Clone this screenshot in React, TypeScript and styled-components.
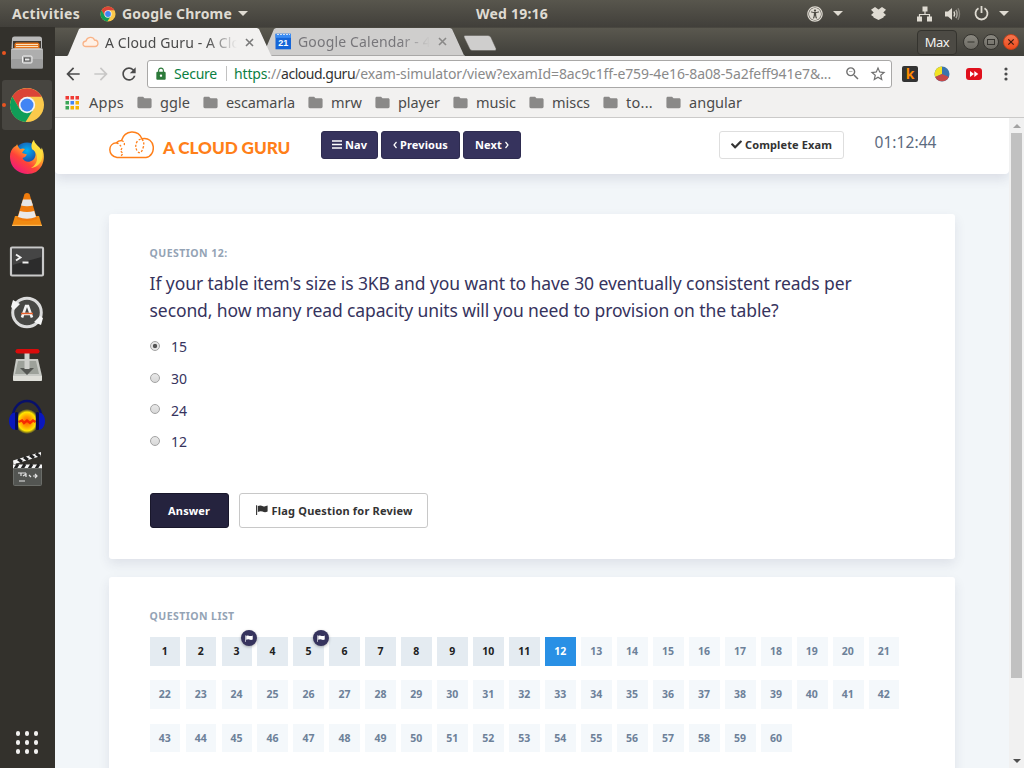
import React from 'react';
import styled, { createGlobalStyle, css } from 'styled-components';
import { MdArrowBack, MdArrowForward, MdRefresh, MdLock, MdZoomOut, MdStarBorder, MdFolder } from 'react-icons/md';
import { FaUniversalAccess, FaCheck } from 'react-icons/fa';

const Global = createGlobalStyle`
  * { box-sizing: border-box; }
  html, body { margin: 0; padding: 0; overflow: hidden; }
  body { font-family: "Noto Sans", "Open Sans", sans-serif; }
  svg { display: block; flex: none; }
`;

const Desktop = styled.div`
  width: 1024px;
  height: 768px;
  display: flex;
  flex-direction: column;
  overflow: hidden;
  background: #33312c;
`;

/* Top panel */
const TopPanel = styled.header`
  height: 27px;
  flex: none;
  display: grid;
  grid-template-columns: 476px 1fr auto;
  align-items: center;
  background: linear-gradient(#58564d, #413f3a);
  color: #dfdbd2;
  font-weight: 700;
  font-size: 14px;
  line-height: 27px;
  white-space: nowrap;
`;
const PanelLeft = styled.div`
  display: flex;
  align-items: center;
  padding-left: 12px;
`;
const PanelText = styled.span<{ $ls: number; $w: number; $gap?: number }>`
  letter-spacing: ${(p) => p.$ls}px;
  width: ${(p) => p.$w}px;
  margin-left: ${(p) => p.$gap ?? 0}px;
`;
const Tray = styled.div`
  display: flex;
  align-items: center;
  padding-right: 14px;
`;
const TrayItem = styled.div<{ $w: number }>`
  width: ${(p) => p.$w}px;
  display: flex;
`;
const Caret = styled.i`
  border: 5px solid transparent;
  border-top-color: #dfdbd2;
  border-bottom: 0;
`;

const Body = styled.div`
  flex: 1;
  min-height: 0;
  display: flex;
`;

/* Dock */
const Dock = styled.nav`
  width: 55px;
  flex: none;
  display: flex;
  flex-direction: column;
  gap: 2px;
  padding: 1px 3px 14px 2px;
  background: #33312c;
`;
const DockItem = styled.div<{ $active?: boolean }>`
  position: relative;
  height: 50px;
  flex: none;
  display: flex;
  align-items: center;
  justify-content: center;
  border-radius: 3px;
  background: ${(p) => (p.$active ? '#474540' : 'transparent')};
`;
const RunningDot = styled.i`
  position: absolute;
  left: 0;
  top: 23px;
  width: 4px;
  height: 4px;
  border-radius: 50%;
  background: #e95420;
`;
const AppGrid = styled.div`
  margin: auto auto 0;
  display: grid;
  grid-template-columns: repeat(3, 4.6px);
  grid-auto-rows: 4.6px;
  gap: 4.4px;
`;
const GridDot = styled.i`
  border-radius: 50%;
  background: #f2f1f0;
`;

/* Browser window */
const Browser = styled.main`
  flex: 1;
  min-width: 0;
  display: flex;
  flex-direction: column;
`;
const TabStrip = styled.div`
  height: 29px;
  flex: none;
  display: flex;
  align-items: flex-end;
  padding-left: 12px;
  background: linear-gradient(#5a584f, #403f3a);
  border-top: 1px solid #494740;
`;
const Tab = styled.div<{ $active?: boolean }>`
  position: relative;
  z-index: ${(p) => (p.$active ? 2 : 1)};
  height: 28px;
  width: ${(p) => (p.$active ? 205 : 203)}px;
  margin-left: ${(p) => (p.$active ? 0 : -10)}px;
  display: flex;
  align-items: center;
  padding: 0 0 0 ${(p) => (p.$active ? 15 : 13)}px;
  clip-path: polygon(0 100%, 1px 97%, 12px 4%, 14px 0, calc(100% - 15px) 0, calc(100% - 13px) 4%, calc(100% - 1px) 97%, 100% 100%);
  background: ${(p) => (p.$active ? '#f2f1f0' : '#cfcecd')};
  color: ${(p) => (p.$active ? '#4a4a4a' : '#77767a')};
  font-size: 14px;
  white-space: nowrap;
  ${(p) => !p.$active && css`border-bottom: 1px solid #a9a8a7;`}
`;
const TabTitle = styled.span<{ $w: number; $ls: number }>`
  width: ${(p) => p.$w}px;
  margin-left: 6px;
  overflow: hidden;
  letter-spacing: ${(p) => p.$ls}px;
  mask-image: linear-gradient(to right, #000 calc(100% - 30px), transparent);
`;
const TabClose = styled.svg`
  margin-left: 8px;
`;
const NewTab = styled.svg`
  margin: 0 auto 5px -2px;
`;
const WindowControls = styled.div`
  display: flex;
  align-items: center;
  height: 28px;
  padding-right: 5px;
`;
const UserChip = styled.span`
  width: 40px;
  height: 25px;
  margin-right: 2px;
  border: 1px solid #34332e;
  border-radius: 4px;
  background: #4c4a44;
  color: #f4f3f1;
  font-size: 13px;
  letter-spacing: -0.5px;
  line-height: 23px;
  text-align: center;
`;
const Round = styled.span<{ $close?: boolean }>`
  width: 16px;
  height: 16px;
  margin-left: 4px;
  border-radius: 50%;
  border: 1px solid ${(p) => (p.$close ? '#c8421b' : '#35342f')};
  background: ${(p) => (p.$close ? 'linear-gradient(#f6764f, #ee4b1c)' : 'linear-gradient(#8a8880, #6d6b64)')};
`;

const Toolbar = styled.div`
  height: 34px;
  flex: none;
  display: flex;
  align-items: center;
  padding: 2px 8px 0 8px;
  background: #f2f1f0;
  color: #4b4b4b;
`;
const ToolIcon = styled.span<{ $w: number; $dim?: boolean }>`
  width: ${(p) => p.$w}px;
  display: flex;
  color: ${(p) => (p.$dim ? '#c8c7c6' : '#4b4b4b')};
`;
const Omnibox = styled.div`
  width: 745px;
  height: 28px;
  flex: none;
  display: flex;
  align-items: center;
  padding: 0 4px 1px 6px;
  border: 1px solid #a9a8a7;
  border-radius: 3px;
  background: #fff;
  font-size: 14px;
  white-space: nowrap;
  color: #707070;
`;
const Secure = styled.span`
  width: 53px;
  height: 15px;
  margin-left: 6px;
  margin-right: 7px;
  border-right: 1px solid #c2c2c2;
  color: #0b8043;
  letter-spacing: -0.22px;
  line-height: 15px;
`;
const UrlPart = styled.span<{ $color: string; $ls: number }>`
  color: ${(p) => p.$color};
  letter-spacing: ${(p) => p.$ls}px;
`;
const OmniIcons = styled.span`
  display: flex;
  gap: 8px;
  margin: 1px 0 0 auto;
`;
const Extensions = styled.div`
  display: flex;
  align-items: center;
  margin-left: 10px;
`;
const Extension = styled.span<{ $w: number }>`
  width: ${(p) => p.$w}px;
  display: flex;
`;
const KBadge = styled.span`
  width: 16px;
  height: 16px;
  border-radius: 2px;
  background: #333;
  color: #ff8a00;
  font: 700 14px/15px "Noto Sans", sans-serif;
  text-align: center;
`;

const Bookmarks = styled.div`
  height: 28px;
  flex: none;
  display: flex;
  align-items: center;
  padding: 0 0 2px 10px;
  background: #f2f1f0;
  border-bottom: 1px solid #cbcac9;
  color: #4b4b4b;
  font-size: 14.5px;
  line-height: 25px;
  white-space: nowrap;
`;
const Bookmark = styled.span<{ $w: number; $ls: number; $gap?: number }>`
  width: ${(p) => p.$w}px;
  flex: none;
  display: flex;
  align-items: center;
  gap: ${(p) => p.$gap ?? 7}px;
  letter-spacing: ${(p) => p.$ls}px;
  svg { color: #8a8988; }
`;

/* Page */
const Viewport = styled.div`
  flex: 1;
  min-height: 0;
  display: flex;
  background: #f2f6f9;
`;
const Page = styled.div`
  flex: 1;
  min-width: 0;
  overflow: hidden;
  display: flex;
  flex-direction: column;
`;
const SiteHeader = styled.div`
  height: 56px;
  flex: none;
  display: flex;
  align-items: flex-start;
  padding: 13px 0 0 54px;
  margin-bottom: 40px;
  border-radius: 0 0 4px 4px;
  background: #fff;
  box-shadow: 0 5px 12px rgba(50, 50, 93, 0.12);
`;
const LogoText = styled.span`
  width: 158px;
  margin-left: 9px;
  padding-top: 4px;
  color: #ff7f19;
  font: 900 17.2px/26px Lato, sans-serif;
  letter-spacing: -0.1px;
  white-space: nowrap;
`;
const buttonBase = css`
  display: flex;
  align-items: center;
  justify-content: center;
  padding: 0;
  font: 700 11px/1 "Noto Sans", sans-serif;
  white-space: nowrap;
`;
const NavButton = styled.button<{ $w: number }>`
  ${buttonBase}
  width: ${(p) => p.$w}px;
  height: 28px;
  margin-right: 3px;
  padding-bottom: 1px;
  gap: 3px;
  border: 1px solid #2e2c50;
  border-radius: 3px;
  background: #36335d;
  color: #fff;
  letter-spacing: 0.12px;
`;
const CompleteButton = styled.button`
  ${buttonBase}
  width: 125px;
  height: 28px;
  margin-left: 195px;
  padding-bottom: 1px;
  gap: 3px;
  border: 1px solid #dedede;
  border-radius: 3px;
  background: #fff;
  color: #333;
  letter-spacing: 0.116px;
`;
const Timer = styled.span`
  margin: 0 0 0 30.5px;
  color: #5c6b80;
  font-size: 15.5px;
  line-height: 22px;
  letter-spacing: 0.062px;
`;
const Card = styled.section<{ $h: number }>`
  width: 846px;
  height: ${(p) => p.$h}px;
  flex: none;
  margin: 0 0 18px 54px;
  padding: 31px 40.6px 0;
  border-radius: 3px;
  background: #fff;
  box-shadow: 0 5px 12px rgba(50, 50, 93, 0.1);
`;
const Overline = styled.h2<{ $ls: number }>`
  margin: 0;
  color: #94a3b5;
  font-size: 10.5px;
  line-height: 16px;
  font-weight: 700;
  letter-spacing: ${(p) => p.$ls}px;
`;
const Question = styled.div`
  display: flex;
  flex-direction: column;
  margin: 9px 0 0;
  color: #36335d;
  font-size: 17.5px;
  line-height: 27px;
  white-space: nowrap;
`;
const Line = styled.span<{ $ls: number }>`
  letter-spacing: ${(p) => p.$ls}px;
`;
const Answers = styled.div`
  margin-top: 7px;
  display: flex;
  flex-direction: column;
`;
const AnswerRow = styled.label`
  height: 31.7px;
  display: flex;
  align-items: center;
  color: #36335d;
  font-size: 14px;
`;
const Radio = styled.span<{ $on?: boolean }>`
  width: 10px;
  height: 10px;
  margin: 0 11.3px 2px 0;
  border: 1px solid #a3a3a3;
  border-radius: 50%;
  background: ${(p) => (p.$on ? 'radial-gradient(circle, #555 0 1.8px, #e6e6e6 2.6px)' : 'linear-gradient(#e8e8e8, #d8d8d8)')};
`;
const Actions = styled.div`
  display: flex;
  gap: 10px;
  margin-top: 35px;
`;
const AnswerButton = styled.button`
  ${buttonBase}
  width: 79px;
  height: 35px;
  border: 1px solid #19172b;
  border-radius: 3px;
  background: #25233e;
  color: #fff;
  letter-spacing: 0.136px;
`;
const FlagButton = styled.button`
  ${buttonBase}
  width: 189px;
  height: 35px;
  padding-left: 2px;
  gap: 4px;
  border: 1px solid #c8c8c8;
  border-radius: 3px;
  background: #fff;
  color: #333;
  letter-spacing: 0.191px;
`;
const QuestionGrid = styled.div`
  display: grid;
  grid-template-columns: repeat(21, 30.8px);
  grid-auto-rows: 28.7px;
  column-gap: 5.17px;
  row-gap: 14.7px;
  margin-top: 13px;
`;
type CellState = 'seen' | 'current' | 'todo';
const cellColors: Record<CellState, [string, string]> = {
  seen: ['#e4ebf1', '#212121'],
  current: ['#2990e5', '#fff'],
  todo: ['#f4f8fb', '#6d8199'],
};
const Cell = styled.div<{ $state: CellState }>`
  position: relative;
  display: flex;
  align-items: center;
  justify-content: center;
  padding: 0 0.6px 0.6px 0;
  background: ${(p) => cellColors[p.$state][0]};
  color: ${(p) => cellColors[p.$state][1]};
  font-size: 10.5px;
  font-weight: 700;
`;
const FlagBadge = styled.span`
  position: absolute;
  right: -5px;
  top: -7px;
  z-index: 1;
  width: 16px;
  height: 16px;
  display: flex;
  align-items: center;
  justify-content: center;
  border-radius: 50%;
  background: #36335d;
  color: #fff;
  box-shadow: 0 1px 3px rgba(0, 0, 0, 0.3);
`;

const ScrollTrack = styled.div`
  width: 15px;
  flex: none;
  display: flex;
  flex-direction: column;
  align-items: center;
  padding: 6px 0 5px;
  background: #f1f1f1;
`;
const ScrollArrow = styled.i<{ $down?: boolean }>`
  border: 4px solid transparent;
  ${(p) => (p.$down
    ? css`margin-top: auto; border-top-color: #505050; border-bottom: 0;`
    : css`border-bottom-color: #a3a3a3; border-top: 0;`)}
`;
const ScrollThumb = styled.div`
  width: 11px;
  height: 545px;
  margin-top: 5px;
  background: #c1c1c1;
`;

/* Drawings */
const ChromeLogo = ({ size }: { size: number }) => (
  <svg width={size} height={size} viewBox="0 0 36 36">
    <circle cx="18" cy="18" r="17" fill="#fbc94b" />
    <path d="M18 18 10.600 22 3.300 9.500A17 17 0 0 1 32.700 9.800H18Z" fill="#db4437" />
    <path d="M3.300 9.500A17 17 0 0 0 16.500 35l8.300-13.200L18 18 10.600 22Z" fill="#109d58" />
    <circle cx="18" cy="18" r="8.200" fill="#f4f4f4" />
    <circle cx="18" cy="18" r="6.500" fill="#4285f4" />
  </svg>
);

const FilesIcon = () => (
  <svg width="36" height="36" viewBox="0 0 36 36">
    <path d="M3 4Q3 1.500 5.500 1.500H30.500Q33 1.500 33 4V13H2.500Z" fill="#b9b9b9" />
    <rect x="4" y="6" width="28" height="9" fill="#3f3a34" />
    <path d="M5.500 9 7 7.500H29L30.500 9V14H5.500Z" fill="#e6761d" />
    <path d="M7 9.500H29M7 11.500H29" stroke="#fbe3c0" />
    <rect x="2" y="13.500" width="32" height="20" rx="1.500" fill="#aeaeae" />
    <path d="M2.500 14H33.500" stroke="#dedede" />
    <rect x="2" y="24" width="32" height="10" rx="1.500" fill="#8f8f8f" opacity=".55" />
    <rect x="13.500" y="21" width="9.500" height="7" rx="1" fill="#aaa" stroke="#f0f0f0" />
    <rect x="15.500" y="23" width="5.500" height="3" fill="#e9e9e9" stroke="#555" />
  </svg>
);

const FirefoxIcon = () => (
  <svg width="36" height="36" viewBox="0 0 36 36">
    <defs>
      <linearGradient id="ffBody" x1=".85" y1=".1" x2=".25" y2=".95">
        <stop offset="0" stopColor="#fff44f" /><stop offset=".35" stopColor="#ffa62b" />
        <stop offset=".65" stopColor="#ff4438" /><stop offset="1" stopColor="#f01b78" />
      </linearGradient>
      <radialGradient id="ffGlobe" cx=".5" cy=".3"><stop offset="0" stopColor="#00b3f4" /><stop offset="1" stopColor="#213f9c" /></radialGradient>
    </defs>
    <circle cx="18" cy="17" r="13.500" fill="url(#ffGlobe)" />
    <path d="M5 8C7 7 8 6 8 5Q9 8 11 10Q14 9 16 10Q14 12 13 14L18 15.500Q17 18 13.500 19C15 23 20 24 24 21C28 17 27 12 23 10C22 6 23 3 25 1C25 5 30 7 32 11Q33 9 32.500 8C37 17 35 28 27 33C17 38 4 33 1.500 22C0 15 2 11 5 8Z" fill="url(#ffBody)" />
    <path d="M25 1C25 5 30 7 32 11C36 19 31 28 22 29Q29 25 28 17Q27 12 23 10C22 6 23 3 25 1Z" fill="#ffe23c" opacity=".85" />
  </svg>
);

const VlcIcon = () => (
  <svg width="36" height="36" viewBox="0 0 36 36">
    <path d="M6 25H30L33 35H3Z" fill="#f08a12" />
    <path d="M3 33.800H33V35H3Z" fill="#fbb653" />
    <path d="M15.500 3Q18 .8 20.500 3L28 28Q18 32 8 28Z" fill="#ef7b0c" />
    <path d="M14 8.500H22L24 14.500Q18 16 12 14.500Z" fill="#e5e5e5" />
    <path d="M10.800 20Q18 22 25.200 20L27 26Q18 29.500 9 26Z" fill="#e9e9e9" />
  </svg>
);

const TerminalIcon = () => (
  <svg width="36" height="36" viewBox="0 0 36 36">
    <rect x="2" y="4.500" width="32" height="28" rx="1" fill="#2c2c2c" stroke="#c9c9c9" strokeWidth="2.200" />
    <path d="M3.500 6H32.500V14L3.500 22Z" fill="#454545" />
    <path d="M7 11.500 11.500 14.500 7 17.500M13.500 19.500H19.500" fill="none" stroke="#f2f2f2" strokeWidth="1.900" />
  </svg>
);

const UpdaterIcon = () => (
  <svg width="36" height="36" viewBox="0 0 36 36">
    <circle cx="18" cy="17.500" r="14.300" fill="#484845" stroke="#dcdcdc" strokeWidth="3" />
    <path d="M2 12 4 5 11 9 5 15ZM34 23 32 30 25 27 31 21Z" fill="#f5f5f5" />
    <path d="M13 22.500 17 11H19L23 22.500M14 19H22" fill="none" stroke="#f4f4f4" strokeWidth="2.600" />
    <path d="M12 18.500H24" stroke="#e8602c" strokeWidth="1.500" />
  </svg>
);

const DownloadIcon = () => (
  <svg width="36" height="36" viewBox="0 0 36 36">
    <path d="M7 12H29L33 29V32.500Q33 34 31.500 34H5.500Q4 34 4 32.500V29Z" fill="#c7c9c4" />
    <path d="M9 14H27L30 27H6Z" fill="#9da19a" />
    <path d="M4 29H33V32.500Q33 34 31.500 34H5.500Q4 34 4 32.500Z" fill="#deded8" />
    <path d="M11 21H25L18 28Z" fill="#555753" />
    <rect x="15.500" y="4" width="5" height="18" fill="#cfd0cc" />
    <rect x="6.500" y="2" width="24" height="4.500" rx="2.200" fill="#d90b0b" />
  </svg>
);

const AudacityIcon = () => (
  <svg width="38" height="36" viewBox="0 0 38 36">
    <defs><radialGradient id="wave"><stop offset="0" stopColor="#ff5a00" /><stop offset=".4" stopColor="#ff9d00" /><stop offset=".75" stopColor="#ffe600" /><stop offset="1" stopColor="#ffe600" stopOpacity="0" /></radialGradient></defs>
    <path d="M4.500 20C5 -4 33 -4 33.500 20" fill="none" stroke="#08106a" strokeWidth="2.600" />
    <ellipse cx="19" cy="22.500" rx="12" ry="12.500" fill="url(#wave)" />
    <path d="M10.500 23 14 21.500 16 24 19 21.500 22 24 25 21.500 27.500 23" stroke="#f51b00" strokeWidth="2.400" fill="none" opacity=".85" />
    <path d="M7 13.500C-1 14-1 30 7 31ZM31 13.500C39 14 39 30 31 31Z" fill="#0a17bd" />
    <rect x="7" y="13" width="3.200" height="18" rx="1.500" fill="#060b55" /><rect x="27.800" y="13" width="3.200" height="18" rx="1.500" fill="#060b55" />
  </svg>
);

const ClapperIcon = () => (
  <svg width="36" height="36" viewBox="0 0 36 36">
    <path d="M4 9.500 32 1V5L4.500 13.500Z" fill="#f5f5f5" />
    <path d="M9 8 13 11M15 6 19 9M21 4 25 7M27 2.500 31 5.500" stroke="#222" strokeWidth="3" />
    <rect x="4" y="13.500" width="29" height="4" fill="#f5f5f5" />
    <path d="M9 13 6 18M16 13 13 18M23 13 20 18M30 13 27 18" stroke="#222" strokeWidth="3" />
    <rect x="4.500" y="17.500" width="28" height="17" rx="1" fill="#535552" stroke="#6b6d69" />
    <path d="M9 22H17M12 22V25M14 25 17 23V26M20 24 22 26M24 25H28M26 23 28 25 26 27M10 30H16" stroke="#e4e4e4" strokeWidth="1.200" fill="none" />
  </svg>
);

const CloudLogo = () => (
  <svg width="45" height="28" viewBox="0 0 45 28">
    <path d="M8 26.500C-1.500 25-1.500 12.500 7.500 11.800C8.500 10.500 10.500 9.500 12.500 9.500C16 -1.500 29 -1.500 33 7.800C46.500 5 48 24.500 37 26.500Z" fill="none" stroke="#ff7f19" strokeWidth="1.500" />
    <path d="M7.500 12Q10.500 12.500 13 17M12.500 9.500Q16.500 11 15 15M13 17 11.500 20 14 22.500 11.500 25.500M33 8Q36 12 34 17Q32 24 28.500 20.500Q25 15 28.500 10Q30.500 8 33 8" fill="none" stroke="#ff7f19" strokeWidth="1.300" strokeDasharray="2.200 1.600" />
  </svg>
);

const TabCloud = () => (
  <svg width="17" height="12" viewBox="0 0 17 12">
    <path d="M4 10.500C0 10.500 0 5.500 4 5C5 .5 11 0 12.500 4C17 4 17 10.500 13 10.500Z" fill="#fff1e6" stroke="#f9b387" strokeWidth="1.300" />
  </svg>
);

const CalendarIcon = () => (
  <svg width="17" height="17" viewBox="0 0 17 17">
    <rect x=".5" y=".8" width="15.500" height="15.500" fill="#1565d8" />
    <rect x=".5" y=".8" width="15.500" height="4" fill="#3b8cf3" />
    <path d="M2 1.500H15" stroke="#cfe0f7" strokeDasharray="2 1" />
    <text x="8.200" y="13" textAnchor="middle" fill="#fff" fontSize="9" fontWeight="700" fontFamily="Liberation Sans, sans-serif">21</text>
  </svg>
);

const CloseGlyph = ({ color }: { color: string }) => (
  <TabClose width="9" height="9" viewBox="0 0 9 9"><path d="M1 1 8 8M8 1 1 8" stroke={color} strokeWidth="1.600" /></TabClose>
);

const FlagGlyph = ({ w, h }: { w: number; h: number }) => (
  <svg width={w} height={h} viewBox="0 0 12 10">
    <path d="M.6 .3V10" stroke="currentColor" strokeWidth="1.100" />
    <path d="M1.800 1Q4.500-.3 7 1.200Q9 1.800 11.600.6V6.600Q9 8 6.500 6.600Q4.500 5.500 1.800 7Z" fill="currentColor" />
  </svg>
);

const NetworkIcon = () => (
  <svg width="16" height="16" viewBox="0 0 16 16" fill="#dfdbd2">
    <rect x="5.500" y=".5" width="5" height="5" /><rect x="0" y="10.500" width="5" height="5" /><rect x="10" y="10.500" width="5" height="5" />
    <path d="M8 5V8.500M2.500 11V8.500H12.500V11" fill="none" stroke="#dfdbd2" strokeWidth="1.200" />
  </svg>
);
const VolumeIcon = () => (
  <svg width="16" height="14" viewBox="0 0 16 14" fill="none">
    <path d="M0 4.500H3L7 1V13L3 9.500H0Z" fill="#dfdbd2" />
    <path d="M9 4.500Q10.300 7 9 9.500" stroke="#dfdbd2" strokeWidth="1.500" />
    <path d="M11 2.800Q13.200 7 11 11.200" stroke="#a9a69e" strokeWidth="1.500" />
    <path d="M13 1.200Q16 7 13 12.800" stroke="#86837b" strokeWidth="1.400" />
  </svg>
);
const PowerIcon = () => (
  <svg width="15" height="15" viewBox="0 0 15 15" fill="none" stroke="#dfdbd2" strokeWidth="1.800">
    <path d="M4.500 2.300A6 6 0 1 0 10.500 2.300M7.500 0V7" />
  </svg>
);
const BoxIcon = () => (
  <svg width="15" height="13" viewBox="0 0 15 13" fill="#dfdbd2">
    <path d="M4 0 7.500 2.600 11 0 15 2.800 12.300 5.400 15 8 12.500 9.700V10.500L7.500 13 2.500 10.500V9.700L0 8 2.700 5.400 0 2.800Z" />
  </svg>
);
const PieIcon = () => (
  <svg width="16" height="16" viewBox="0 0 16 16">
    <circle cx="8" cy="8" r="7.500" fill="#3b74ad" />
    <path d="M8 8V.5A7.500 7.500 0 0 0 1.200 11Z" fill="#f3e424" />
    <path d="M8 8 1.200 11A7.500 7.500 0 0 0 14.800 11Z" fill="#c64848" />
  </svg>
);
const ForwardExt = () => (
  <svg width="16" height="12" viewBox="0 0 16 12">
    <rect width="16" height="12" rx="3" fill="#e0101c" />
    <path d="M4 3 8 6 4 9ZM8.300 3 12.300 6 8.300 9Z" fill="#fff" />
  </svg>
);
const appsColors = ['#ef3b35', '#ef3b35', '#ef3b35', '#3aa657', '#4285f4', '#f5b400', '#3aa657', '#f5b400', '#f5b400'];
const AppsIcon = () => (
  <svg width="14" height="14" viewBox="0 0 14 14">
    {appsColors.map((c, i) => <rect key={i} x={0.5 + (i % 3) * 5} y={Math.floor(i / 3) * 5} width="3.500" height="3.500" fill={c} />)}
  </svg>
);

const dockApps: { Icon: React.FC; running?: boolean; active?: boolean }[] = [
  { Icon: FilesIcon, running: true },
  { Icon: () => <ChromeLogo size={36} />, running: true, active: true },
  { Icon: FirefoxIcon },
  { Icon: VlcIcon },
  { Icon: TerminalIcon },
  { Icon: UpdaterIcon },
  { Icon: DownloadIcon },
  { Icon: AudacityIcon },
  { Icon: ClapperIcon },
];

const bookmarks: [string, number, number][] = [
  ['ggle', 66, 0.06], ['escamarla', 105, -0.086], ['mrw', 67, 0.02], ['player', 78, -0.06], ['music', 76, -0.033],
  ['miscs', 74, -0.03], ['to...', 63, 0.267], ['angular', 80, 0.023],
];

const answers = ['15', '30', '24', '12'];
const flagged = [3, 5];
const current = 12;

export default function App() {
  return (
    <Desktop>
      <Global />
      <TopPanel>
        <PanelLeft>
          <PanelText $ls={0.3} $w={88}>Activities</PanelText>
          <ChromeLogo size={16} />
          <PanelText $ls={0.194} $w={116} $gap={6}>Google Chrome</PanelText>
          <Caret />
        </PanelLeft>
        <PanelText $ls={0.214} $w={80}>Wed 19:16</PanelText>
        <Tray>
          <TrayItem $w={26}><FaUniversalAccess size={16} /></TrayItem>
          <TrayItem $w={38}><Caret /></TrayItem>
          <TrayItem $w={46}><BoxIcon /></TrayItem>
          <TrayItem $w={28}><NetworkIcon /></TrayItem>
          <TrayItem $w={29}><VolumeIcon /></TrayItem>
          <TrayItem $w={25}><PowerIcon /></TrayItem>
          <TrayItem $w={11}><Caret /></TrayItem>
        </Tray>
      </TopPanel>
      <Body>
        <Dock>
          {dockApps.map(({ Icon, running, active }, i) => (
            <DockItem key={i} $active={active}>
              {running && <RunningDot />}
              <Icon />
            </DockItem>
          ))}
          <AppGrid>{Array.from({ length: 9 }, (_, i) => <GridDot key={i} />)}</AppGrid>
        </Dock>
        <Browser>
          <TabStrip>
            <Tab $active>
              <TabCloud />
              <TabTitle $w={132} $ls={0.1}>A Cloud Guru - A Clo</TabTitle>
              <CloseGlyph color="#7a7a7a" />
            </Tab>
            <Tab>
              <CalendarIcon />
              <TabTitle $w={132} $ls={0.168}>Google Calendar - 4</TabTitle>
              <CloseGlyph color="#8a8988" />
            </Tab>
            <NewTab width="34" height="16" viewBox="0 0 34 16">
              <path d="M2 .5H25Q27 .5 28 2.500L33 13.500Q33.500 15.500 32 15.500H9.500Q7.500 15.500 6.800 14L1 2Q.5 .5 2 .5Z" fill="#cfcecd" stroke="#5b5952" strokeWidth=".5" />
            </NewTab>
            <WindowControls>
              <UserChip>Max</UserChip>
              <Round><svg width="14" height="14" viewBox="0 0 14 14"><path d="M3.500 7H10.500" stroke="#35342f" /></svg></Round>
              <Round><svg width="14" height="14" viewBox="0 0 14 14"><rect x="3.500" y="4.500" width="7" height="5" fill="none" stroke="#35342f" /></svg></Round>
              <Round $close><svg width="14" height="14" viewBox="0 0 14 14"><path d="M4.300 4.300 9.700 9.700M9.700 4.300 4.300 9.700" stroke="#3d1a10" strokeWidth="1.200" /></svg></Round>
            </WindowControls>
          </TabStrip>
          <Toolbar>
            <ToolIcon $w={28}><MdArrowBack size={20} /></ToolIcon>
            <ToolIcon $w={28} $dim><MdArrowForward size={20} /></ToolIcon>
            <ToolIcon $w={28}><MdRefresh size={20} /></ToolIcon>
            <Omnibox>
              <MdLock size={14} color="#2c7a3a" />
              <Secure>Secure</Secure>
              <UrlPart $color="#0b8043" $ls={-0.15}>https</UrlPart>
              <UrlPart $color="#8a8a8a" $ls={-0.15}>://</UrlPart>
              <UrlPart $color="#333" $ls={-0.488}>acloud.guru</UrlPart>
              <UrlPart $color="#8a8a8a" $ls={-0.104}>/exam-simulator/view?examId=8ac9c1ff-e759-4e16-8a08-5a2feff941e7&amp;...</UrlPart>
              <OmniIcons><MdZoomOut size={17} /><MdStarBorder size={18} /></OmniIcons>
            </Omnibox>
            <Extensions>
              <Extension $w={32}><KBadge>k</KBadge></Extension>
              <Extension $w={32}><PieIcon /></Extension>
              <Extension $w={38}><ForwardExt /></Extension>
              <svg width="4" height="14" viewBox="0 0 4 14" fill="#4b4b4b"><circle cx="2" cy="2" r="1.600" /><circle cx="2" cy="7" r="1.600" /><circle cx="2" cy="12" r="1.600" /></svg>
            </Extensions>
          </Toolbar>
          <Bookmarks>
            <Bookmark $w={71} $ls={0.239} $gap={10}><AppsIcon />Apps</Bookmark>
            {bookmarks.map(([label, w, ls]) => (
              <Bookmark key={label} $w={w} $ls={ls}><MdFolder size={17} />{label}</Bookmark>
            ))}
          </Bookmarks>
          <Viewport>
            <Page>
              <SiteHeader>
                <CloudLogo />
                <LogoText>A CLOUD GURU</LogoText>
                <NavButton $w={57}>
                  <svg width="10" height="9" viewBox="0 0 10 9"><path d="M0 1H10M0 4.500H10M0 8H10" stroke="#fff" strokeWidth="1.600" /></svg>Nav
                </NavButton>
                <NavButton $w={79}>
                  <svg width="4" height="8" viewBox="0 0 4 8"><path d="M3.500 1 1 4 3.500 7" fill="none" stroke="#fff" strokeWidth="1.200" /></svg>Previous
                </NavButton>
                <NavButton $w={58}>
                  Next<svg width="4" height="8" viewBox="0 0 4 8"><path d="M.5 1 3 4 .5 7" fill="none" stroke="#fff" strokeWidth="1.200" /></svg>
                </NavButton>
                <CompleteButton><FaCheck size={11} />Complete Exam</CompleteButton>
                <Timer>01:12:44</Timer>
              </SiteHeader>
              <Card $h={345}>
                <Overline $ls={0.451}>QUESTION 12:</Overline>
                <Question>
                  <Line $ls={-0.081}>If your table item's size is 3KB and you want to have 30 eventually consistent reads per</Line>
                  <Line $ls={-0.107}>second, how many read capacity units will you need to provision on the table?</Line>
                </Question>
                <Answers>
                  {answers.map((a, i) => <AnswerRow key={a}><Radio $on={i === 0} />{a}</AnswerRow>)}
                </Answers>
                <Actions>
                  <AnswerButton>Answer</AnswerButton>
                  <FlagButton><FlagGlyph w={12} h={10} />Flag Question for Review</FlagButton>
                </Actions>
              </Card>
              <Card $h={240}>
                <Overline $ls={0.429}>QUESTION LIST</Overline>
                <QuestionGrid>
                  {Array.from({ length: 60 }, (_, i) => i + 1).map((n) => (
                    <Cell key={n} $state={n < current ? 'seen' : n === current ? 'current' : 'todo'}>
                      {n}
                      {flagged.includes(n) && <FlagBadge><FlagGlyph w={8} h={7} /></FlagBadge>}
                    </Cell>
                  ))}
                </QuestionGrid>
              </Card>
            </Page>
            <ScrollTrack>
              <ScrollArrow />
              <ScrollThumb />
              <ScrollArrow $down />
            </ScrollTrack>
          </Viewport>
        </Browser>
      </Body>
    </Desktop>
  );
}
